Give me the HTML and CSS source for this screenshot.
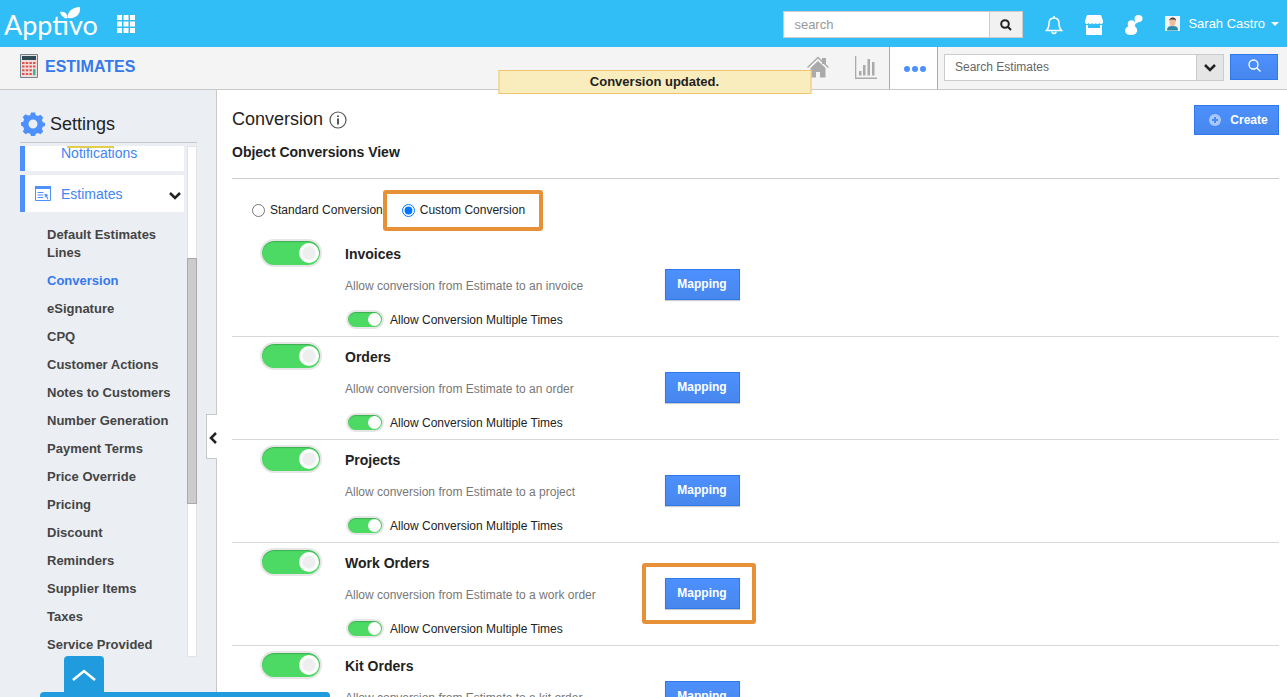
FILE: index.html
```html
<!DOCTYPE html>
<html lang="en">
<head>
  <meta charset="UTF-8">
  <meta name="viewport" content="width=device-width, initial-scale=1">
  <title>Apptivo - Estimates Settings</title>
  <link rel="stylesheet" href="styles.css">
</head>
<body>
  <header class="topbar">
    <a href="#" class="logo">Apptivo
      <svg class="leaf" width="21" height="12" viewBox="0 0 21 12"><path d="M8 11C7 5 12 0 20 0C21 7 16 12 8 11ZM7 11C3 11 1 8 0 5C5 4 8 7 7 11Z" fill="#fff"/></svg>
    </a>
    <button class="icon-btn apps" aria-label="Apps">
      <svg width="18" height="18" viewBox="0 0 18 18" fill="#fff"><path d="M0 0h5v5H0zM6.500 0h5v5h-5zM13 0h5v5h-5zM0 6.500h5v5H0zM6.500 6.500h5v5h-5zM13 6.500h5v5h-5zM0 13h5v5H0zM6.500 13h5v5h-5zM13 13h5v5h-5z"/></svg>
    </button>
    <form class="global-search">
      <input type="text" placeholder="search" aria-label="search">
      <button type="button" aria-label="Search">
        <svg width="12" height="12" viewBox="0 0 12 12" fill="none" stroke="#222" stroke-width="2"><circle cx="5" cy="5" r="3.800"/><path d="M7.800 7.800L11 11"/></svg>
      </button>
    </form>
    <nav class="top-icons">
      <button class="icon-btn" aria-label="Notifications">
        <svg width="18" height="20" viewBox="0 0 18 20" fill="none" stroke="#fff" stroke-width="1.500"><path d="M9 1v2M1.500 15.500C3.500 13.500 4 12 4 8.500C4 5 6 3 9 3s5 2 5 5.500c0 3.500 .500 5 2.500 7z"/><path d="M7 16.500c0 2.500 4 2.500 4 0"/></svg>
      </button>
      <button class="icon-btn" aria-label="Store">
        <svg width="18" height="20" viewBox="0 0 18 20" fill="#fff"><path d="M2 0h14l2 6v1.500a2 2 0 0 1-3.600.500a2 2 0 0 1-3.600 0a2 2 0 0 1-3.600 0a2 2 0 0 1-3.600 0A2 2 0 0 1 0 7.500V6z"/><path d="M1 10h2v3h12v-3h2v10H1z"/></svg>
      </button>
      <button class="icon-btn" aria-label="Contacts">
        <svg width="18" height="20" viewBox="0 0 18 20" fill="#fff"><circle cx="6.500" cy="9" r="3.800"/><path d="M4 11h5c2.500 1 3.500 3 3 5.500c-.500 2.500-3 3.500-6 3.500s-5.500-1-6-3.500c-.500-2.500 1.500-4.500 4-5.500z"/><ellipse cx="13.500" cy="3.500" rx="4" ry="3.500"/><path d="M10 4v5l4-2z"/></svg>
      </button>
    </nav>
    <button class="user">
      <svg width="15" height="15" viewBox="0 0 15 15"><path d="M0 0h15v15H0z" fill="#eef4f8"/><path d="M2 14.500c0-4 2.500-4.500 5.500-4.500s5.500.500 5.500 4.500z" fill="#2d8ba8"/><ellipse cx="7.500" cy="6" rx="3" ry="4.200" fill="#efbe98"/><path d="M4 5C4 1 11 0 11 5L9.500 3.500H5z" fill="#46332c"/></svg>
      <span>Sarah Castro</span>
      <i class="caret"></i>
    </button>
  </header>

  <div class="appbar">
    <svg class="calc" width="18" height="24" viewBox="0 0 18 24"><path d="M.5.5h17v23H.5z" fill="#f1ddd9" stroke="#6d8591"/><path d="M2 2h14v4H2z" fill="#2f4a55"/><g fill="#e0564f"><path d="M2 8h2.500v2H2zM5.700 8h2.500v2h-2.500zM9.400 8h2.500v2h-2.500zM13 8h2.500v2h-2.500zM2 11.600h2.500v2H2zM5.700 11.600h2.500v2h-2.500zM9.400 11.600h2.500v2h-2.500zM13 11.600h2.500v2h-2.500zM2 15.200h2.500v2H2zM5.700 15.200h2.500v2h-2.500zM9.400 15.200h2.500v2h-2.500zM2 18.900h2.500v2H2zM5.700 18.900h2.500v2h-2.500zM9.400 18.900h2.500v2h-2.500z"/></g><path d="M13 15.200h2.500v6H13z" fill="#35b39c"/></svg>
    <h1>ESTIMATES</h1>
    <nav class="tabs">
      <button class="icon-btn" aria-label="Home">
        <svg width="22" height="22" viewBox="0 0 22 22"><path d="M15 2h4v6h-4z" fill="#aaa"/><path d="M3.500 12L11 5l7.500 7v9.500H13V16H9v5.500H3.500z" fill="#aaa"/><path d="M.5 11.500L11 1.500l10.500 10" fill="none" stroke="#aaa" stroke-width="1.500"/></svg>
      </button>
      <button class="icon-btn" aria-label="Reports">
        <svg width="22" height="23" viewBox="0 0 22 23" fill="#aaa"><path d="M0 0h1.300v21.500H22V23H0zM4 15h2.500v4.500H4zM8 9h2.500v10.500H8zM12.500 3h2.500v16.500h-2.500zM17 6h2.500v13.500H17z"/></svg>
      </button>
      <button class="icon-btn more" aria-label="More">
        <svg width="22" height="6" viewBox="0 0 22 6" fill="#4d90fe"><circle cx="3" cy="3" r="3"/><circle cx="11" cy="3" r="3"/><circle cx="19" cy="3" r="3"/></svg>
      </button>
    </nav>
    <form class="app-search">
      <input type="text" placeholder="Search Estimates" aria-label="Search Estimates">
      <button type="button" class="drop" aria-label="Search options">
        <svg width="12" height="8" viewBox="0 0 12 8" fill="none" stroke="#222" stroke-width="2.500"><path d="M1 1l5 5l5-5"/></svg>
      </button>
      <button type="button" class="btn go" aria-label="Search">
        <svg width="13" height="13" viewBox="0 0 13 13" fill="none" stroke="#fff" stroke-width="1.300"><circle cx="5.500" cy="5.500" r="4.500"/><path d="M8.700 8.700L12.500 12.500"/></svg>
      </button>
    </form>
  </div>

  <div class="toast" role="status">Conversion updated.</div>

  <div class="page">
    <aside class="sidebar">
      <h2>
        <svg width="24" height="24" viewBox="0 0 24 24"><path fill="#4d90fe" fill-rule="evenodd" d="M10 .5h4l.8 2.700 2.200.9 2.500-1.300 2.700 2.700-1.300 2.500.9 2.200 2.200.8v3l-2.200.8-.9 2.200 1.300 2.500-2.700 2.700-2.500-1.300-2.200.9-.8 2.200h-4l-.8-2.200-2.200-.9-2.500 1.300-2.700-2.700 1.300-2.500-.9-2.200L0 13.500v-3l2.200-.8.9-2.200L1.800 5l2.700-2.700L7 3.600l2.200-.4zM12 7.500a4.500 4.500 0 1 0 0 9a4.500 4.500 0 1 0 0-9z"/></svg>
        Settings
      </h2>
      <div class="menu-wrap">
        <div class="menu">
          <a href="#" class="group clipped">Notifications</a>
          <a href="#" class="group">
            <svg width="16" height="15" viewBox="0 0 16 15"><path d="M.5.5h15v14H.5z" fill="#fff" stroke="#4d90fe"/><path d="M0 0h16v3H0z" fill="#4d90fe"/><path d="M2.500 6.500h6M2.500 9h6M2.500 11.500h6" stroke="#4d90fe"/><path d="M9.500 7.500l4 1.500-1.500 1 1.500 3-1 .5-1.500-3-1 1z" fill="#4d90fe"/></svg>
            <span>Estimates</span>
            <svg class="chev" width="12" height="8" viewBox="0 0 12 8" fill="none" stroke="#222" stroke-width="2.500"><path d="M1 1l5 5l5-5"/></svg>
          </a>
          <ul>
            <li><a href="#">Default Estimates Lines</a></li>
            <li><a href="#" class="active">Conversion</a></li>
            <li><a href="#">eSignature</a></li>
            <li><a href="#">CPQ</a></li>
            <li><a href="#">Customer Actions</a></li>
            <li><a href="#">Notes to Customers</a></li>
            <li><a href="#">Number Generation</a></li>
            <li><a href="#">Payment Terms</a></li>
            <li><a href="#">Price Override</a></li>
            <li><a href="#">Pricing</a></li>
            <li><a href="#">Discount</a></li>
            <li><a href="#">Reminders</a></li>
            <li><a href="#">Supplier Items</a></li>
            <li><a href="#">Taxes</a></li>
            <li><a href="#">Service Provided</a></li>
          </ul>
        </div>
        <div class="track"><div class="thumb"></div></div>
      </div>
      <button class="collapse" aria-label="Collapse">
        <svg width="8" height="12" viewBox="0 0 8 12" fill="none" stroke="#222" stroke-width="2.500"><path d="M7 1L2 6l5 5"/></svg>
      </button>
    </aside>

    <main class="content">
      <div class="title">
        <h2>Conversion</h2>
        <svg width="18" height="18" viewBox="0 0 18 18"><circle cx="9" cy="9" r="8" fill="#fff" stroke="#555" stroke-width="1.200"/><path d="M8 4.500h2v1.500H8zM8 7.500h2V13.500H8z" fill="#555"/></svg>
        <button class="btn create">
          <svg width="12" height="12" viewBox="0 0 12 12"><circle cx="6" cy="6" r="6" fill="#a9c8fb"/><path d="M6 3v6M3 6h6" stroke="#4a8af4" stroke-width="2"/></svg>
          Create
        </button>
      </div>
      <h3 class="subtitle">Object Conversions View</h3>

      <div class="modes">
        <label class="mode"><input type="radio" name="mode">Standard Conversion</label>
        <label class="mode marked"><input type="radio" name="mode" checked>Custom Conversion</label>
      </div>

      <section class="row">
        <input type="checkbox" class="switch" aria-label="Invoices" checked>
        <div class="info">
          <h4>Invoices</h4>
          <p>Allow conversion from Estimate to an invoice</p>
          <label><input type="checkbox" class="switch small" checked>Allow Conversion Multiple Times</label>
        </div>
        <div class="action"><button class="btn">Mapping</button></div>
      </section>
      <section class="row">
        <input type="checkbox" class="switch" aria-label="Orders" checked>
        <div class="info">
          <h4>Orders</h4>
          <p>Allow conversion from Estimate to an order</p>
          <label><input type="checkbox" class="switch small" checked>Allow Conversion Multiple Times</label>
        </div>
        <div class="action"><button class="btn">Mapping</button></div>
      </section>
      <section class="row">
        <input type="checkbox" class="switch" aria-label="Projects" checked>
        <div class="info">
          <h4>Projects</h4>
          <p>Allow conversion from Estimate to a project</p>
          <label><input type="checkbox" class="switch small" checked>Allow Conversion Multiple Times</label>
        </div>
        <div class="action"><button class="btn">Mapping</button></div>
      </section>
      <section class="row">
        <input type="checkbox" class="switch" aria-label="Work Orders" checked>
        <div class="info">
          <h4>Work Orders</h4>
          <p>Allow conversion from Estimate to a work order</p>
          <label><input type="checkbox" class="switch small" checked>Allow Conversion Multiple Times</label>
        </div>
        <div class="action marked"><button class="btn">Mapping</button></div>
      </section>
      <section class="row">
        <input type="checkbox" class="switch" aria-label="Kit Orders" checked>
        <div class="info">
          <h4>Kit Orders</h4>
          <p>Allow conversion from Estimate to a kit order</p>
          <label><input type="checkbox" class="switch small" checked>Allow Conversion Multiple Times</label>
        </div>
        <div class="action"><button class="btn">Mapping</button></div>
      </section>
    </main>
  </div>

  <div class="dock">
    <button aria-label="Open dock">
      <svg width="24" height="12" viewBox="0 0 24 12" fill="none" stroke="#fff" stroke-width="2.500"><path d="M1 11L12 2l11 9"/></svg>
    </button>
    <div class="dock-bar"></div>
  </div>
</body>
</html>
```
FILE: styles.css
```css
* {
  margin: 0;
  padding: 0;
  box-sizing: border-box;
}
body {
  font-family: "Liberation Sans", Arial, sans-serif;
  font-size: 12px;
  color: #222;
  height: 100vh;
  display: flex;
  flex-direction: column;
  overflow: hidden;
  background: #fff;
}
a {
  text-decoration: none;
}
button, input {
  font-family: inherit;
}
button {
  cursor: pointer;
}
svg {
  flex: none;
}
.icon-btn {
  background: none;
  border: none;
  display: flex;
  align-items: center;
  justify-content: center;
}

/* top bar */
.topbar {
  flex: none;
  height: 47px;
  background: #31bdf6;
  display: flex;
  align-items: center;
  padding-right: 8px;
}
.logo {
  position: relative;
  width: 97px;
  padding-left: 4px;
  font-family: Lato, sans-serif;
  font-size: 27px;
  line-height: 40px;
  padding-top: 3px;
  color: #fff;
}
.leaf {
  position: absolute;
  left: 60px;
  top: 5px;
}
.apps {
  margin-left: 20px;
}
.global-search {
  margin-left: auto;
  display: flex;
  width: 240px;
  height: 27px;
  margin-top: 2px;
}
.global-search input {
  flex: 1;
  min-width: 0;
  border: 1px solid #ccc;
  padding: 0 10px;
  font-size: 13px;
  outline: none;
}
.global-search input::placeholder {
  color: #999;
}
.global-search button {
  width: 33px;
  border: 1px solid #ccc;
  border-left: none;
  background: #f1f1f1;
  display: flex;
  align-items: center;
  justify-content: center;
}
.top-icons {
  display: flex;
  gap: 22px;
  margin: 2px 0 0 22px;
}
.user {
  display: flex;
  align-items: center;
  margin-left: 22px;
  background: none;
  border: none;
  color: #fff;
  font-size: 13px;
}
.user span {
  margin: 0 6px 0 8px;
}
.caret {
  border: 4px solid transparent;
  border-top-color: #fff;
  border-bottom: none;
}

/* app bar */
.appbar {
  flex: none;
  height: 43px;
  background: #f4f4f4;
  border-bottom: 1px solid #c8c8c8;
  display: flex;
  align-items: center;
  padding: 0 9px 0 20px;
}
.calc {
  margin-top: -4px;
}
.appbar h1 {
  font-size: 16px;
  line-height: 20px;
  color: #3579eb;
  margin: -2px 0 0 7px;
}
.tabs {
  margin-left: auto;
  display: flex;
  align-self: stretch;
}
.tabs .icon-btn {
  width: 48px;
  padding: 0 0 2px 1px;
}
.tabs .more {
  width: 49px;
  padding: 2px 0 0 2px;
  background: #fff;
  border: solid #aaa;
  border-width: 0 1px;
}
.app-search {
  display: flex;
  align-items: flex-start;
  width: 334px;
  height: 27px;
  margin: -2px 0 0 6px;
}
.app-search input {
  flex: 1;
  min-width: 0;
  height: 27px;
  border: 1px solid #ccc;
  padding: 0 10px;
  font-size: 12px;
  outline: none;
}
.app-search input::placeholder {
  color: #666;
}
.app-search .drop {
  width: 27px;
  height: 27px;
  border: 1px solid #ccc;
  border-left: none;
  background: #e5e5e5;
}
.btn {
  border: 1px solid #3079ed;
  background: linear-gradient(#4d90fe, #4787ed);
  color: #fff;
  font-size: 12px;
  font-weight: bold;
}
.btn.go {
  width: 48px;
  height: 26px;
  margin-left: 6px;
}
.toast {
  position: absolute;
  top: 70px;
  left: calc(50% + 11px);
  transform: translateX(-50%);
  width: 313px;
  height: 24px;
  line-height: 22px;
  text-align: center;
  font-size: 13px;
  font-weight: bold;
  background: #f9edbe;
  border: 1px solid #f0c36d;
}

/* page */
.page {
  flex: 1;
  min-height: 0;
  display: flex;
}
.sidebar {
  flex: none;
  width: 217px;
  position: relative;
  display: flex;
  flex-direction: column;
  background: #ebeff4;
  border-right: 1px solid #c8c8c8;
  padding: 22px 19px 40px 20px;
}
.sidebar h2 {
  display: flex;
  align-items: center;
  gap: 5px;
  padding-left: 1px;
  height: 31px;
  padding-bottom: 6px;
  font-size: 18px;
  font-weight: normal;
  border-bottom: 1px solid #c8c8c8;
}
.menu-wrap {
  flex: 1;
  min-height: 0;
  margin-top: 3px;
  display: flex;
  justify-content: space-between;
}
.menu {
  width: 164px;
  overflow: hidden;
}
.group {
  display: flex;
  align-items: center;
  height: 37px;
  margin-bottom: 5px;
  padding: 0 3px 0 10px;
  border-left: 5px solid #4d90fe;
  background: #fff;
  color: #4285f4;
  font-size: 14px;
}
.group span {
  margin-left: 10px;
}
.group .chev {
  margin: 4px 0 0 auto;
}
.group.clipped {
  position: relative;
  height: 25px;
  padding: 0 0 12px 36px;
  margin-bottom: 4px;
}
.clipped::before {
  content: "";
  position: absolute;
  left: 42px;
  top: 0;
  width: 47px;
  height: 2px;
  background: #e3cd4b;
}
.menu ul {
  list-style: none;
  padding: 9px 0 0 27px;
}
.menu li {
  margin-bottom: 10px;
  font-size: 13px;
  line-height: 18px;
  font-weight: bold;
}
.menu li a {
  color: #444;
}
.menu li .active {
  color: #3579eb;
}
.track {
  width: 10px;
  background: #fff;
  border: 1px solid #e3e3e3;
  padding-top: 111px;
}
.thumb {
  height: 246px;
  margin: 0 -1px;
  background: #ccc;
  border: 1px solid #aaa;
}
.collapse {
  position: absolute;
  top: 324px;
  right: -1px;
  width: 11px;
  height: 45px;
  padding: 3px 0 0 2px;
  background: #fff;
  border: 1px solid #c8c8c8;
  border-right: none;
  display: flex;
  align-items: center;
  justify-content: center;
}

/* content */
.content {
  flex: 1;
  min-width: 0;
  padding: 15px 8px 0 15px;
  overflow: hidden;
}
.title {
  display: flex;
  align-items: center;
  height: 30px;
}
.title h2 {
  font-size: 18px;
  line-height: 20px;
  font-weight: normal;
  margin: -2px 6px 0 0;
}
.create {
  display: flex;
  align-items: center;
  justify-content: center;
  gap: 9px;
  width: 85px;
  height: 30px;
  margin-left: auto;
  padding-left: 4px;
}
.subtitle {
  height: 44px;
  padding-top: 8px;
  font-size: 14px;
  line-height: 18px;
  border-bottom: 1px solid #ccc;
}
.modes {
  display: flex;
  align-items: center;
  height: 55px;
  padding: 7px 0 0 20px;
}
.mode {
  display: flex;
  align-items: center;
  gap: 5px;
}
.mode input {
  width: 13px;
  height: 13px;
}
.marked {
  border: 4px solid #e69138;
  border-radius: 3px;
}
.mode.marked {
  width: 160px;
  height: 41px;
  padding-left: 15px;
}
.row {
  display: flex;
  height: 103px;
  padding: 5px 0 0 28px;
  border-bottom: 1px solid #d8d8d8;
}
.switch {
  appearance: none;
  flex: none;
  position: relative;
  width: 62px;
  height: 28px;
  border: 2px solid #e6e6e6;
  border-radius: 14px;
  background: #4cd964;
  box-shadow: inset 0 1px 1px #3fae53;
}
.switch::after {
  content: "";
  position: absolute;
  right: 1px;
  top: 2px;
  width: 20px;
  height: 20px;
  border-radius: 50%;
  background: radial-gradient(#eee 40%, #fff 55%);
}
.switch.small {
  width: 38px;
  height: 19px;
}
.small::after {
  top: 1px;
  width: 13px;
  height: 13px;
  background: #fff;
}
.info {
  width: 297px;
  margin-left: 23px;
}
.info h4 {
  margin-top: 6px;
  font-size: 14px;
  line-height: 18px;
}
.info p {
  margin-top: 15px;
  line-height: 16px;
  color: #777;
}
.info label {
  display: flex;
  align-items: center;
  gap: 6px;
  margin: 16px 0 0 1px;
}
.action {
  width: 114px;
  height: 61px;
  display: flex;
  align-items: center;
  justify-content: center;
  margin-top: 15px;
  padding: 0 0 1px 6px;
}
.action .btn {
  width: 75px;
  height: 31px;
  box-shadow: 0 1px 1px #ccc;
}

/* bottom dock */
.dock {
  position: fixed;
  left: 40px;
  bottom: 0;
  width: 290px;
}
.dock button {
  display: block;
  width: 40px;
  height: 36px;
  margin-left: 24px;
  padding-top: 4px;
  border: none;
  border-radius: 4px 4px 0 0;
  background: #1f9bde;
}
.dock-bar {
  height: 5px;
  background: #1f9bde;
  border-radius: 4px 4px 0 0;
}
```
